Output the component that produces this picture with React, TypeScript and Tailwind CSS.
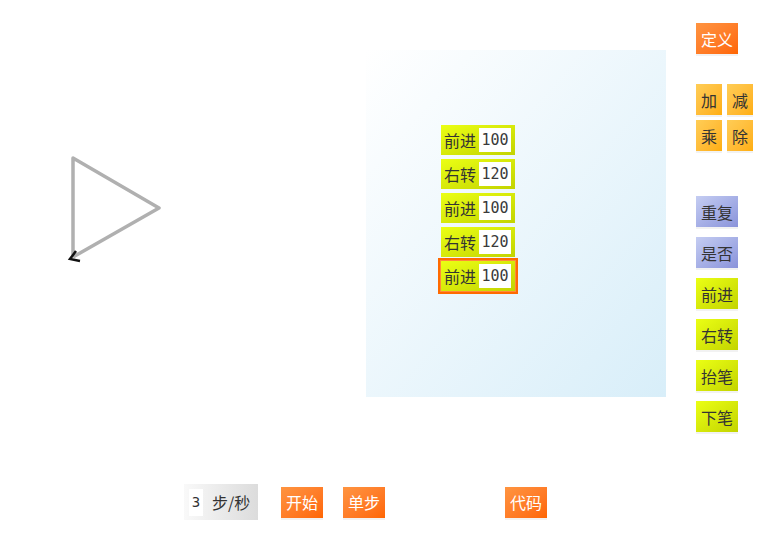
const cjk = "font-['Noto_Sans_CJK_SC','Noto_Sans',sans-serif]";
const mono = "font-['DejaVu_Sans_Mono',monospace]";

const green = "bg-linear-to-br from-[#ebff14] to-[#c3d400] text-[#333]";
const orange = "bg-linear-to-br from-[#ff9440] to-[#ff6600] text-white";
const yellow = "bg-linear-to-br from-[#ffcd55] to-[#ffae0a] text-[#333]";
const blue = "bg-linear-to-br from-[#c5cdf2] to-[#8a93da] text-[#333]";

const program = [
  { op: "前进", n: 100 },
  { op: "右转", n: 120 },
  { op: "前进", n: 100 },
  { op: "右转", n: 120 },
  { op: "前进", n: 100, active: true },
];

function Btn({ label, tone, w = "w-[42px]" }: { label: string; tone: string; w?: string }) {
  return (
    <div
      className={`${tone} ${w} flex h-[31px] items-center justify-center text-[16px] shadow-[0_2px_0_rgba(0,0,0,0.05)]`}
    >
      {label}
    </div>
  );
}

function Block({ op, n, active }: { op: string; n: number; active?: boolean }) {
  return (
    <div
      className={`${green} flex h-[30px] w-[74px] items-center pl-[3px] ${
        active ? "relative shadow-[0_0_0_1px_#ff8a3a,0_0_0_3px_#ff6a00]" : ""
      }`}
    >
      <span className="w-[32px] text-[16px] leading-none">{op}</span>
      <span
        className={`${mono} ml-[3px] flex h-[24px] w-[32px] items-center justify-center bg-white text-[15px] text-[#3a3a3a]`}
      >
        {n}
      </span>
    </div>
  );
}

export default function App() {
  return (
    <div className={`${cjk} flex h-[550px] w-[780px] flex-col bg-white`}>
      <div className="flex h-[484px] items-start">
        {/* turtle canvas */}
        <svg width="366" height="484" className="shrink-0">
          <polyline
            points="73,255 73,158 159,208 73,257"
            fill="none"
            stroke="#b0b0b0"
            strokeWidth="3.5"
            strokeLinejoin="round"
          />
          <polyline
            points="76,251 70,259 80,261"
            fill="none"
            stroke="#111"
            strokeWidth="2.5"
          />
        </svg>

        {/* program panel */}
        <div className="mt-[50px] flex h-[347px] w-[300px] shrink-0 flex-col gap-[4px] bg-linear-to-br from-white to-[#d8eef9] pl-[75px] pt-[75px]">
          {program.map((b, i) => (
            <Block key={i} {...b} />
          ))}
        </div>

        {/* palette */}
        <div className="ml-[30px] flex flex-col pt-[23px]">
          <Btn label="定义" tone={orange} />
          <div className="mt-[30px] grid w-[57px] grid-cols-2 gap-x-[5px] gap-y-[5px]">
            <Btn label="加" tone={yellow} w="w-[26px]" />
            <Btn label="减" tone={yellow} w="w-[26px]" />
            <Btn label="乘" tone={yellow} w="w-[26px]" />
            <Btn label="除" tone={yellow} w="w-[26px]" />
          </div>
          <div className="mt-[45px] flex flex-col gap-[10px]">
            <Btn label="重复" tone={blue} />
            <Btn label="是否" tone={blue} />
            <Btn label="前进" tone={green} />
            <Btn label="右转" tone={green} />
            <Btn label="抬笔" tone={green} />
            <Btn label="下笔" tone={green} />
          </div>
        </div>
      </div>

      {/* controls */}
      <div className="flex h-[36px] items-center pl-[184px]">
        <div className="flex h-[36px] w-[74px] items-center bg-linear-to-r from-[#f9f9f9] to-[#dcdcdc] pl-[5px]">
          <span
            className={`${mono} flex h-[27px] w-[14px] items-center justify-center bg-white text-[14px] text-[#333]`}
          >
            3
          </span>
          <span className="ml-[9px] text-[16px] text-[#333]">步/秒</span>
        </div>
        <div className="ml-[23px]">
          <Btn label="开始" tone={orange} />
        </div>
        <div className="ml-[20px]">
          <Btn label="单步" tone={orange} />
        </div>
        <div className="ml-[120px]">
          <Btn label="代码" tone={orange} />
        </div>
      </div>
    </div>
  );
}
